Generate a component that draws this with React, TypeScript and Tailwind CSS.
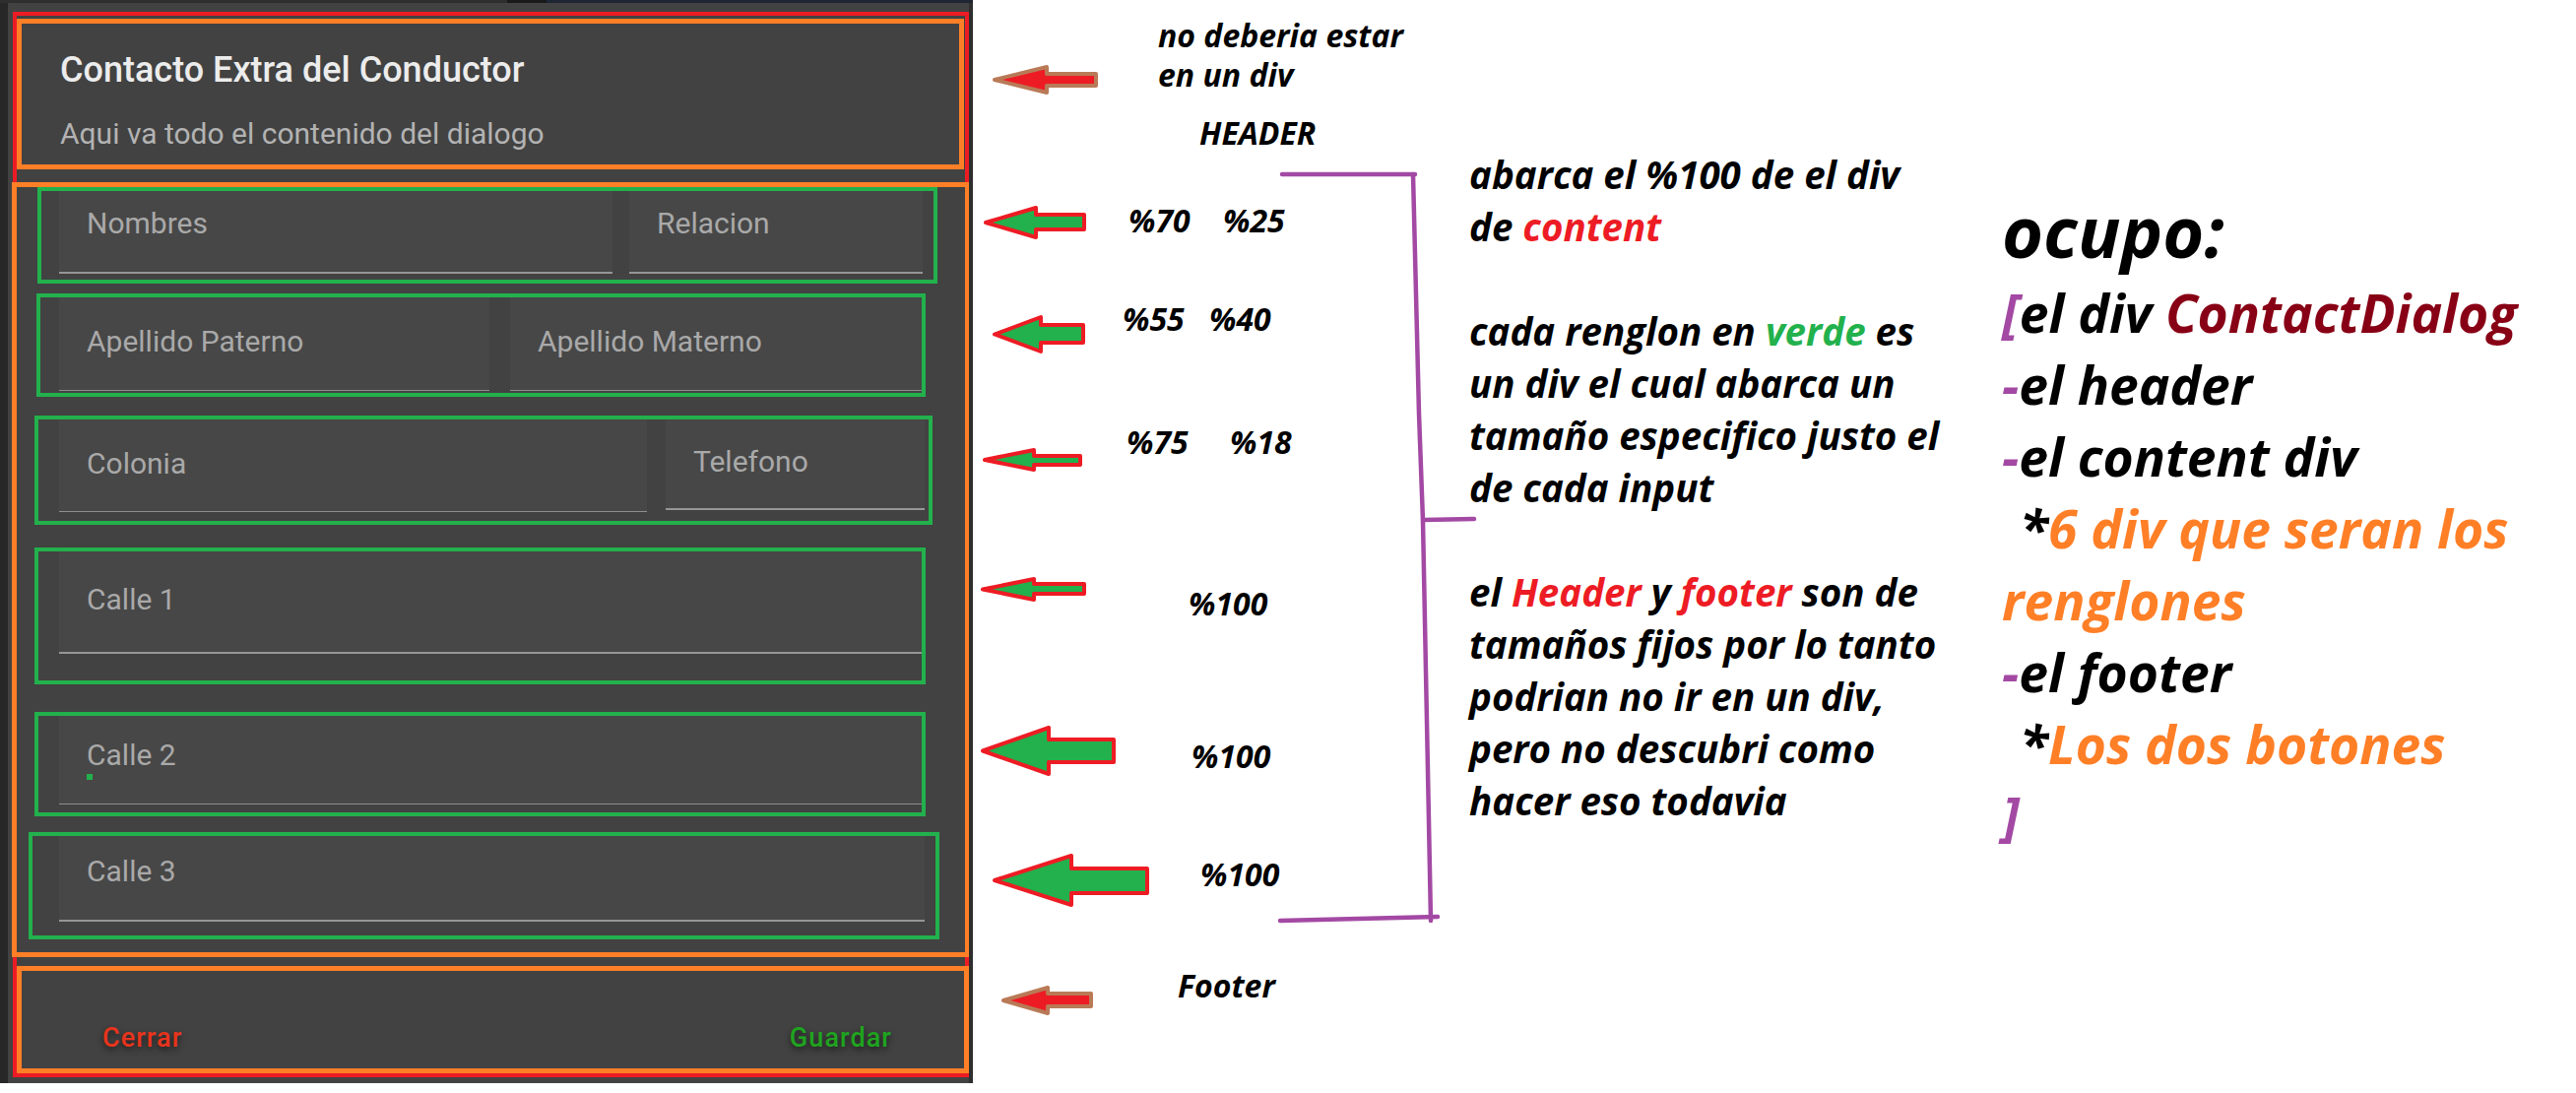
import React from "react";

type Arrow = {
  tip: number;
  hx: number;
  tail: number;
  ht: number;
  hb: number;
  st: number;
  sb: number;
  fill: string;
  stroke: string;
};

const RED = "#ed1c24";
const GREEN = "#22b14c";
const BROWN = "#b97a57";

const arrows: Arrow[] = [
  { tip: 22, hx: 75, tail: 125, ht: 68, hb: 94, st: 75, sb: 87, fill: RED, stroke: BROWN },
  { tip: 13, hx: 64, tail: 113, ht: 211, hb: 241, st: 218, sb: 233, fill: GREEN, stroke: RED },
  { tip: 22, hx: 69, tail: 112, ht: 322, hb: 357, st: 330, sb: 348, fill: GREEN, stroke: RED },
  { tip: 12, hx: 62, tail: 109, ht: 457, hb: 477, st: 463, sb: 472, fill: GREEN, stroke: RED },
  { tip: 10, hx: 62, tail: 113, ht: 588, hb: 609, st: 593, sb: 603, fill: GREEN, stroke: RED },
  { tip: 10, hx: 77, tail: 143, ht: 739, hb: 786, st: 751, sb: 774, fill: GREEN, stroke: RED },
  { tip: 22, hx: 100, tail: 177, ht: 869, hb: 919, st: 882, sb: 907, fill: GREEN, stroke: RED },
  { tip: 31, hx: 76, tail: 120, ht: 1003, hb: 1029, st: 1009, sb: 1022, fill: RED, stroke: BROWN },
];

function pts(a: Arrow) {
  const cy = (a.ht + a.hb) / 2;
  return `${a.tip},${cy} ${a.hx},${a.ht} ${a.hx},${a.st} ${a.tail},${a.st} ${a.tail},${a.sb} ${a.hx},${a.sb} ${a.hx},${a.hb}`;
}

function Field({
  className,
  label,
  children,
}: {
  className: string;
  label: string;
  children?: React.ReactNode;
}) {
  return (
    <div className={`flex shrink-0 flex-col bg-[#474747] pl-[28px] ${className}`}>
      <span className="font-['Roboto',sans-serif] text-[30px] leading-[36px] whitespace-nowrap text-[#a9a9a9]">
        {label}
      </span>
      {children}
    </div>
  );
}

function Dialog() {
  return (
    <div className="flex h-[1100px] w-[988px] shrink-0 flex-col">
      <div className="flex h-[3px]">
        <div className="w-[515px] bg-[#2e2e2e]" />
        <div className="w-[40px] bg-[#1a1a1a]" />
        <div className="flex-1 bg-[#1f2633]" />
      </div>
      <div className="flex flex-1">
        <div className="w-[8px] bg-[#272727]" />
        <div className="flex w-[976px] flex-col bg-[#424242] pt-[9px] pb-[6px] pl-[5px]">
          <div className="flex flex-1 flex-col border-4 border-[#ed1c24]">
            {/* Header */}
            <div className="mt-[3px] mr-[1px] flex h-[153px] flex-col border-[5px] border-[#ff7f27] pt-[27px] pl-[39px]">
              <div className="font-['Roboto',sans-serif] text-[36px] leading-[40px] font-medium whitespace-nowrap text-[#ececec]">
                Contacto Extra del Conductor
              </div>
              <div className="mt-[27px] font-['Roboto',sans-serif] text-[30px] leading-[36px] whitespace-nowrap text-[#b3b3b3]">
                Aqui va todo el contenido del dialogo
              </div>
            </div>

            {/* Content */}
            <div className="mt-[13px] -mr-[5px] -ml-[5px] flex h-[787px] flex-col border-[5px] border-[#ff7f27]">
              <div className="mr-[28px] ml-[21px] flex items-start gap-[17px] border-4 border-[#22b14c] pr-[11px] pb-[6px] pl-[18px]">
                <Field className="h-[84px] w-[562px] border-b-2 border-[#969696] pt-[15px]" label="Nombres" />
                <Field className="h-[84px] flex-1 border-b-2 border-[#969696] pt-[15px]" label="Relacion" />
              </div>

              <div className="mt-[10px] mr-[40px] ml-[20px] flex items-start gap-[21px] border-4 border-[#22b14c] pb-[2px] pl-[19px]">
                <Field className="h-[95px] w-[437px] border-b border-[#8e8e8e] pt-[27px]" label="Apellido Paterno" />
                <Field className="h-[95px] flex-1 border-b border-[#8e8e8e] pt-[27px]" label="Apellido Materno" />
              </div>

              <div className="mt-[19px] mr-[33px] ml-[18px] flex items-start gap-[19px] border-4 border-[#22b14c] pr-[4px] pb-[9px] pl-[21px]">
                <Field className="h-[94px] w-[597px] border-b border-[#8e8e8e] pt-[27px]" label="Colonia" />
                <Field className="h-[92px] flex-1 border-b-2 border-[#969696] pt-[25px]" label="Telefono" />
              </div>

              <div className="mt-[23px] mr-[40px] ml-[18px] flex border-4 border-[#22b14c] pb-[27px] pl-[21px]">
                <Field className="h-[104px] flex-1 border-b-2 border-[#969696] pt-[31px]" label="Calle 1" />
              </div>

              <div className="mt-[28px] mr-[40px] ml-[18px] flex border-4 border-[#22b14c] pb-[8px] pl-[21px]">
                <Field className="h-[90px] flex-1 border-b border-[#8e8e8e] pt-[22px]" label="Calle 2">
                  <div className="mt-[1px] h-[6px] w-[6px] bg-[#22b14c]" />
                </Field>
              </div>

              <div className="mt-[16px] mr-[26px] ml-[12px] flex border-4 border-[#22b14c] pr-[11px] pb-[14px] pl-[27px]">
                <Field className="h-[87px] flex-1 border-b-2 border-[#969696] pt-[18px]" label="Calle 3" />
              </div>
            </div>

            {/* Footer */}
            <div className="mt-[9px] -mr-[4px] flex h-[109px] items-start justify-between border-[5px] border-[#ff7f27] pt-[52px] pr-[73px] pl-[82px]">
              <span className="font-['Roboto',sans-serif] text-[27px] leading-[32px] font-medium tracking-[0.04em] text-[#e8341c] [text-shadow:0_3px_6px_rgba(0,0,0,0.6)]">
                Cerrar
              </span>
              <span className="font-['Roboto',sans-serif] text-[27px] leading-[32px] font-medium tracking-[0.04em] text-[#1fa31f] [text-shadow:0_3px_6px_rgba(0,0,0,0.6)]">
                Guardar
              </span>
            </div>
          </div>
        </div>
        <div className="w-[4px] bg-[#2e2e2e]" />
      </div>
    </div>
  );
}

const note = "absolute font-['Open_Sans',sans-serif] text-[32px] leading-[40px] font-bold italic whitespace-nowrap text-black";

function Annotations() {
  return (
    <div className="relative h-[1110px] flex-1">
      <svg
        className="pointer-events-none absolute top-0 left-0"
        width="1628"
        height="1110"
        viewBox="0 0 1628 1110"
      >
        {arrows.map((a, i) => (
          <polygon
            key={i}
            points={pts(a)}
            fill={a.fill}
            stroke={a.stroke}
            strokeWidth={4}
            strokeLinejoin="round"
          />
        ))}
        <g stroke="#a349a4" strokeWidth={4.5} fill="none" strokeLinecap="round" strokeLinejoin="round">
          <polyline points="314,177 449,177" />
          <polyline points="447,177 453,420 457,529 465,935" />
          <polyline points="457,528 509,527" />
          <polyline points="312,935 472,931" />
        </g>
      </svg>

      <div className={`${note} top-[16px] left-[188px]`}>no deberia estar</div>
      <div className={`${note} top-[56px] left-[188px]`}>en un div</div>
      <div className={`${note} top-[115px] left-[230px]`}>HEADER</div>

      <div className={`${note} top-[204px] left-[158px]`}>%70</div>
      <div className={`${note} top-[204px] left-[254px]`}>%25</div>
      <div className={`${note} top-[304px] left-[152px]`}>%55</div>
      <div className={`${note} top-[304px] left-[240px]`}>%40</div>
      <div className={`${note} top-[429px] left-[156px]`}>%75</div>
      <div className={`${note} top-[429px] left-[261px]`}>%18</div>
      <div className={`${note} top-[593px] left-[219px]`}>%100</div>
      <div className={`${note} top-[748px] left-[222px]`}>%100</div>
      <div className={`${note} top-[868px] left-[231px]`}>%100</div>
      <div className={`${note} top-[981px] left-[208px]`}>Footer</div>

      <div className="flex items-start pl-[504px] font-['Open_Sans',sans-serif] font-bold italic text-black">
        <div className="w-[541px] shrink-0 pt-[151px] text-[38.5px] leading-[53px] whitespace-nowrap">
          <div>abarca el %100 de el div</div>
          <div>
            de <span className="text-[#ed1c24]">content</span>
          </div>
          <div className="h-[53px]" />
          <div>
            cada renglon en <span className="text-[#22b14c]">verde</span> es
          </div>
          <div>un div el cual abarca un</div>
          <div>tamaño especifico justo el</div>
          <div>de cada input</div>
          <div className="h-[53px]" />
          <div>
            el <span className="text-[#ed1c24]">Header</span> y{" "}
            <span className="text-[#ed1c24]">footer</span> son de
          </div>
          <div>tamaños fijos por lo tanto</div>
          <div>podrian no ir en un div,</div>
          <div>pero no descubri como</div>
          <div>hacer eso todavia</div>
        </div>

        <div className="flex flex-col pt-[187px] text-[53.4px] leading-[73px] whitespace-nowrap">
          <div className="text-[72px] leading-[94px]">ocupo:</div>
          <div>
            <span className="text-[#a349a4]">[</span>el div <span className="text-[#880015]">ContactDialog</span>
          </div>
          <div>
            <span className="text-[#a349a4]">-</span>el header
          </div>
          <div>
            <span className="text-[#a349a4]">-</span>el content div
          </div>
          <div className="pl-[18px]">
            *<span className="text-[#ff7f27]">6 div que seran los</span>
          </div>
          <div className="text-[#ff7f27]">renglones</div>
          <div>
            <span className="text-[#a349a4]">-</span>el footer
          </div>
          <div className="pl-[18px]">
            *<span className="text-[#ff7f27]">Los dos botones</span>
          </div>
          <div className="text-[#a349a4]">]</div>
        </div>
      </div>
    </div>
  );
}

export default function App() {
  return (
    <div className="flex h-[1110px] w-[2616px] overflow-hidden bg-white">
      <Dialog />
      <Annotations />
    </div>
  );
}
